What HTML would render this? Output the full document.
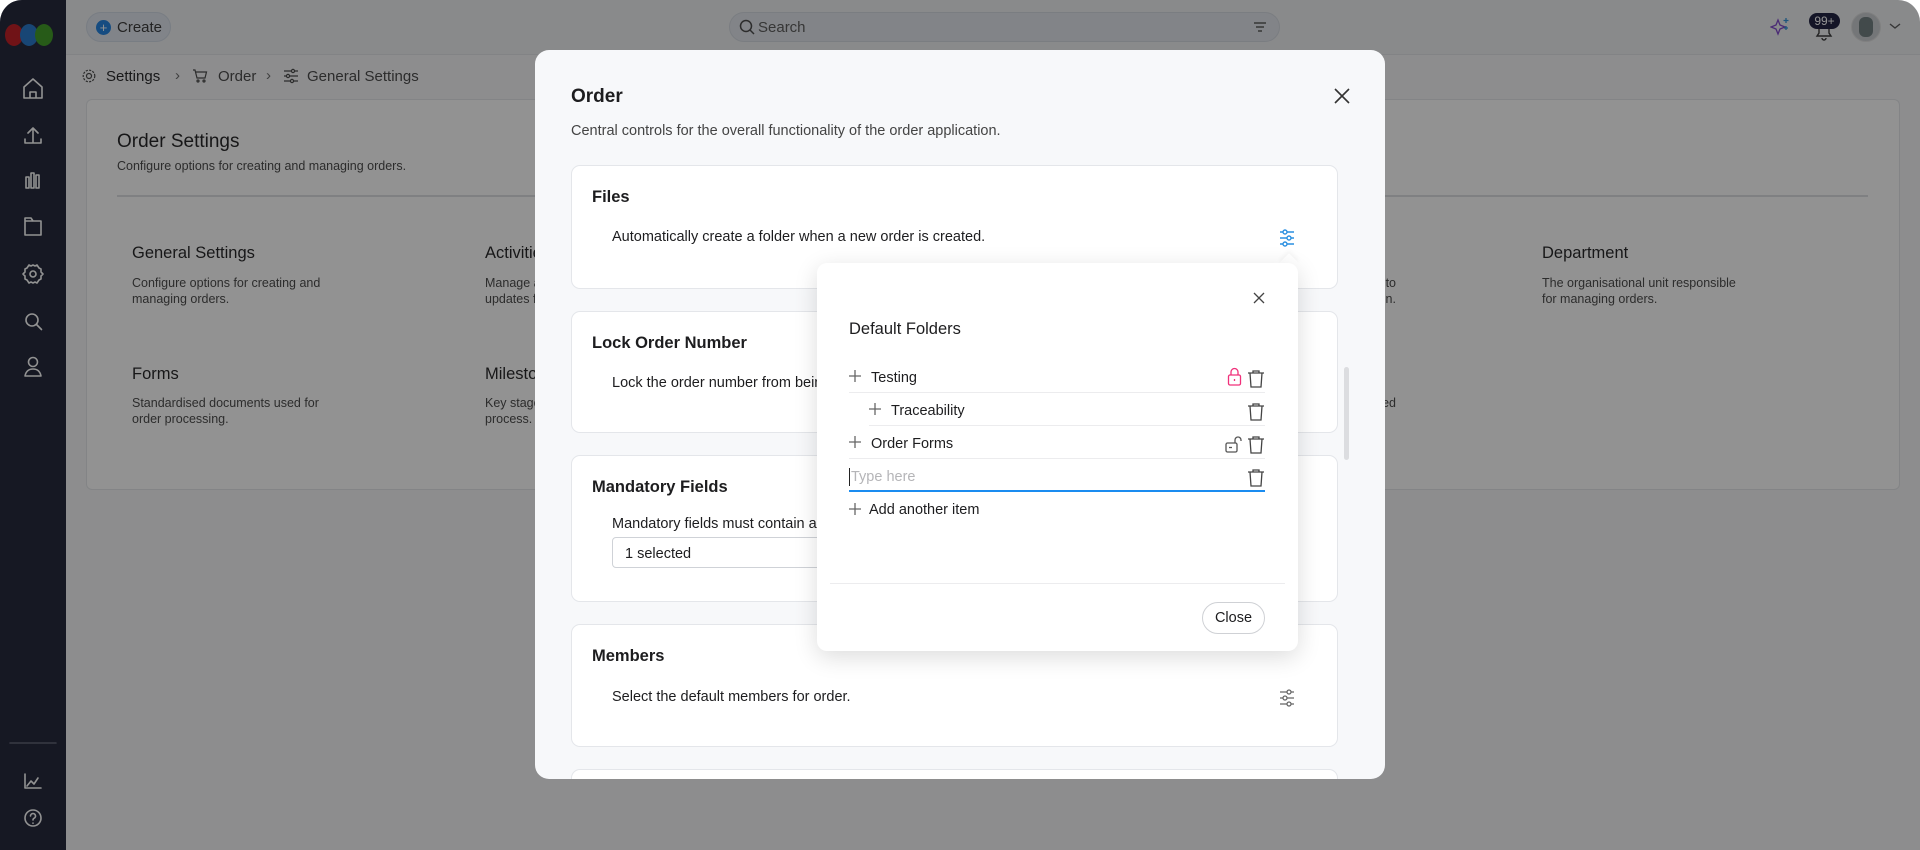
<!DOCTYPE html>
<html><head><meta charset="utf-8"><style>
*{box-sizing:border-box;margin:0;padding:0}
body{width:1920px;height:850px;background:#fff;font-family:"Liberation Sans",sans-serif;overflow:hidden;position:relative;color:#1d1d1f}
.abs{position:absolute}
#frame{position:absolute;left:0;top:0;width:1920px;height:850px;border-radius:22px 22px 0 0;overflow:hidden;background:#f5f6f8}
#side{position:absolute;left:0;top:0;width:66px;height:850px;background:#1a1e33}
#top{position:absolute;left:66px;top:0;right:0;height:55px;background:#eef0f3;border-bottom:1px solid #e2e4e8}
.t{position:absolute;white-space:nowrap;line-height:1}
#overlay{position:absolute;left:0;top:0;width:1920px;height:850px;background:rgba(18,18,18,0.46)}
.card{position:absolute;left:36px;width:767px;background:#fff;border:1px solid #e4e6ea;border-radius:9px}
.card .h{position:absolute;left:20px;font-size:16.5px;font-weight:bold;color:#1d1d1f}
.card .d{position:absolute;left:40px;font-size:14.5px;color:#1d1d1f}
.row{position:absolute;height:33px;border-bottom:1px solid #ececee}
</style></head><body>
<div id="frame">
 <div id="side">
  <div class="abs" style="left:5px;top:24px;width:18px;height:22px;border-radius:50%;background:#c0161c"></div>
  <div class="abs" style="left:20px;top:24px;width:18px;height:22px;border-radius:50%;background:#1f73c9"></div>
  <div class="abs" style="left:35px;top:24px;width:18px;height:22px;border-radius:50%;background:#3a9a1e"></div>
  <svg class="abs" style="left:0;top:0" width="66" height="850" fill="none" stroke="#fff" stroke-width="1.6" stroke-linecap="round" stroke-linejoin="round">
   <path d="M24 87l9-8 9 8v11H24z M30 98v-6h6v6"/>
   <path d="M33 142v-14 M28 133l5-5 5 5 M25 139v4h16v-4"/>
   <path d="M26 188v-11h3v11z M31 188v-15h3v15z M36 188v-13h3v13z"/>
   <path d="M25 221h16v14H25z M25 221v-3h6l2 3"/>
   <circle cx="33" cy="274" r="3"/><path d="M33 265l2 1 2-1 2 3 2 1v3l2 2-2 2v3l-2 1-2 3-2-1-2 1-2-1-2 1-2-3-2-1v-3l-2-2 2-2v-3l2-1 2-3 2 1z"/>
   <circle cx="32" cy="320" r="6"/><path d="M36.5 324.5l5 5"/>
   <circle cx="33" cy="362" r="4.5"/><path d="M25 376c1-5 4-7 8-7s7 2 8 7z"/>
   <path d="M10 743h46" stroke="#5b5f72"/>
   <path d="M25 774v14h16 M27 786l4-5 3 3 4-6"/>
   <circle cx="33" cy="818" r="8"/><path d="M30.5 816a2.5 2.5 0 1 1 3.5 2.3c-.8.4-1 1-1 1.7 M33 823v.2"/>
  </svg>
 </div>
 <div id="top">
  <div class="abs" style="left:20px;top:12px;width:85px;height:30px;border-radius:15px;background:#dfe5ee;border:1px solid #d0d8e4"></div>
  <div class="abs" style="left:30px;top:20px;width:15px;height:15px;border-radius:50%;background:#1a7fe0;color:#fff;font-size:13px;line-height:15px;text-align:center">+</div>
  <div class="t" style="left:51px;top:20px;font-size:15px;color:#333">Create</div>
  <div class="abs" style="left:663px;top:12px;width:551px;height:30px;border-radius:15px;background:#e2e6ec;border:1px solid #d3d8e0"></div>
  <svg class="abs" style="left:672px;top:18px" width="18" height="18" fill="none" stroke="#444" stroke-width="1.5"><circle cx="8" cy="8" r="5.5"/><path d="M12 12l4 4"/></svg>
  <div class="t" style="left:692px;top:20px;font-size:15px;color:#555">Search</div>
  <svg class="abs" style="left:1186px;top:20px" width="16" height="14" stroke="#555" stroke-width="1.4"><path d="M2 3h12M4 7h8M6 11h4"/></svg>
  <svg class="abs" style="left:1704px;top:16px" width="20" height="20" fill="none" stroke="#7b3fc9" stroke-width="1.3"><path d="M8 4l2 5 5 2-5 2-2 5-2-5-5-2 5-2z"/><path d="M16 2v5M13.5 4.5h5M16 10v4M14 12h4" stroke="#2a8fd8"/></svg>
  <svg class="abs" style="left:1747px;top:18px" width="22" height="24" fill="none" stroke="#333" stroke-width="1.4"><path d="M4 18h14l-2-3v-5a5 5 0 0 0-10 0v5z M9 20a2 2 0 0 0 4 0"/></svg>
  <div class="abs" style="left:1743px;top:13px;width:31px;height:16px;border-radius:8px;background:#17193a;color:#fff;font-size:12px;line-height:16px;text-align:center">99+</div>
  <div class="abs" style="left:1785px;top:12px;width:30px;height:30px;border-radius:50%;background:#c8ccd0;border:1px solid #ddd"></div>
  <div class="abs" style="left:1793px;top:17px;width:14px;height:20px;border-radius:6px;background:#6c7a7c"></div>
  <svg class="abs" style="left:1822px;top:21px" width="14" height="10" fill="none" stroke="#555" stroke-width="1.4"><path d="M2 3l5 4 5-4"/></svg>
 </div>
 <svg class="abs" style="left:82px;top:69px" width="14" height="14" fill="none" stroke="#444" stroke-width="1.2"><circle cx="7" cy="7" r="2.5"/><circle cx="7" cy="7" r="5.8" stroke-dasharray="2.2 1.2"/></svg>
 <div class="t" style="left:106px;top:69px;font-size:15px;color:#1d1d1f">Settings</div>
 <div class="t" style="left:175px;top:68px;font-size:15px;color:#666">›</div>
 <svg class="abs" style="left:192px;top:68px" width="16" height="16" fill="none" stroke="#444" stroke-width="1.2"><path d="M1 2h2l2 8h8l1.5-6H4"/><circle cx="6" cy="13" r="1"/><circle cx="12" cy="13" r="1"/></svg>
 <div class="t" style="left:218px;top:69px;font-size:15px;color:#444">Order</div>
 <div class="t" style="left:266px;top:68px;font-size:15px;color:#666">›</div>
 <svg class="abs" style="left:283px;top:68px" width="16" height="16" fill="none" stroke="#444" stroke-width="1.2"><path d="M1 3h14M1 8h14M1 13h14"/><circle cx="10" cy="3" r="1.6" fill="#eee"/><circle cx="5" cy="8" r="1.6" fill="#eee"/><circle cx="9" cy="13" r="1.6" fill="#eee"/></svg>
 <div class="t" style="left:307px;top:69px;font-size:15px;color:#444">General Settings</div>
 <div class="abs" style="left:86px;top:99px;width:1814px;height:391px;background:#fff;border:1px solid #e3e5e9;border-radius:6px"></div>
 <div class="t" style="left:117px;top:132px;font-size:19px;color:#1d1d1f">Order Settings</div>
 <div class="t" style="left:117px;top:160px;font-size:12.5px;color:#444">Configure options for creating and managing orders.</div>
 <div class="abs" style="left:117px;top:195px;width:1751px;height:2px;background:#dcdee2"></div>
 <div class="t" style="left:132px;top:245px;font-size:16.5px">General Settings</div>
 <div class="t" style="left:132px;top:275px;font-size:12.5px;color:#444;line-height:16px;white-space:normal;width:220px">Configure options for creating and managing orders.</div>
 <div class="t" style="left:485px;top:245px;font-size:16.5px">Activities</div>
 <div class="t" style="left:485px;top:275px;font-size:12.5px;color:#444;line-height:16px">Manage activities and<br>updates for orders.</div>
 <div class="t" style="left:1190px;top:275px;font-size:12.5px;color:#444;line-height:16px;width:206px;text-align:right">responsible to<br>completion.</div>
 <div class="t" style="left:1542px;top:245px;font-size:16.5px">Department</div>
 <div class="t" style="left:1542px;top:275px;font-size:12.5px;color:#444;line-height:16px">The organisational unit responsible<br>for managing orders.</div>
 <div class="t" style="left:132px;top:366px;font-size:16.5px">Forms</div>
 <div class="t" style="left:132px;top:395px;font-size:12.5px;color:#444;line-height:16px">Standardised documents used for<br>order processing.</div>
 <div class="t" style="left:485px;top:366px;font-size:16.5px">Milestones</div>
 <div class="t" style="left:485px;top:395px;font-size:12.5px;color:#444;line-height:16px">Key stages in the order<br>process.</div>
 <div class="t" style="left:1190px;top:395px;font-size:12.5px;color:#444;line-height:16px;width:206px;text-align:right">completed</div>
 <div id="overlay"></div>
</div>

<div class="abs" style="left:535px;top:50px;width:850px;height:729px;background:#f7f8fa;border-radius:14px;overflow:hidden">
 <div class="t" style="left:36px;top:37px;font-size:19px;font-weight:bold">Order</div>
 <svg class="abs" style="left:798px;top:37px" width="18" height="18" stroke="#333" stroke-width="1.6"><path d="M2 2l14 14M16 2L2 16"/></svg>
 <div class="t" style="left:36px;top:74px;font-size:14.5px;color:#444">Central controls for the overall functionality of the order application.</div>
 <div class="card" style="top:115px;height:124px">
  <div class="h" style="top:22px">Files</div>
  <div class="d" style="top:63px">Automatically create a folder when a new order is created.</div>
  <svg class="abs" style="left:707px;top:63px" width="16" height="18" fill="none" stroke="#2a8fe0" stroke-width="1.4"><path d="M1 3h14M1 9h14M1 15h14"/><circle cx="6" cy="3" r="2" fill="#fff"/><circle cx="10" cy="9" r="2" fill="#fff"/><circle cx="6" cy="15" r="2" fill="#fff"/></svg>
 </div>
 <div class="card" style="top:261px;height:122px">
  <div class="h" style="top:22px">Lock Order Number</div>
  <div class="d" style="top:63px">Lock the order number from being changed.</div>
 </div>
 <div class="card" style="top:405px;height:147px">
  <div class="h" style="top:22px">Mandatory Fields</div>
  <div class="d" style="top:60px">Mandatory fields must contain a value.</div>
  <div class="abs" style="left:40px;top:81px;width:300px;height:31px;border:1px solid #cfd2d7;border-radius:4px;font-size:14.5px;padding:8px 12px">1 selected</div>
 </div>
 <div class="card" style="top:574px;height:123px">
  <div class="h" style="top:22px">Members</div>
  <div class="d" style="top:64px">Select the default members for order.</div>
  <svg class="abs" style="left:707px;top:64px" width="16" height="18" fill="none" stroke="#666" stroke-width="1.3"><path d="M1 3h14M1 9h14M1 15h14"/><circle cx="10" cy="3" r="2" fill="#fff"/><circle cx="6" cy="9" r="2" fill="#fff"/><circle cx="10" cy="15" r="2" fill="#fff"/></svg>
 </div>
 <div class="card" style="top:719px;height:100px"></div>
 <div class="abs" style="left:809px;top:317px;width:5px;height:93px;border-radius:3px;background:#dcdde0"></div>
</div>

<div class="abs" style="left:1282px;top:256px;width:14px;height:14px;background:#fff;transform:rotate(45deg);box-shadow:-2px -2px 4px rgba(0,0,0,0.04)"></div>
<div class="abs" style="left:817px;top:263px;width:481px;height:388px;background:#fff;border-radius:10px;box-shadow:0 6px 24px rgba(0,0,0,0.14)">
 <svg class="abs" style="left:435px;top:28px" width="14" height="14" stroke="#444" stroke-width="1.3"><path d="M2 2l10 10M12 2L2 12"/></svg>
 <div class="t" style="left:32px;top:58px;font-size:16.5px">Default Folders</div>
 <div class="row" style="left:32px;top:97px;width:416px"></div>
 <div class="row" style="left:52px;top:130px;width:396px"></div>
 <div class="row" style="left:32px;top:163px;width:416px"></div>
 <div class="abs" style="left:32px;top:227px;width:416px;height:2px;background:#1a8cf0"></div>
 <svg class="abs" style="left:0;top:0" width="481" height="270" fill="none" stroke="#666" stroke-width="1.3">
  <path d="M38 107v12M32 113h12"/><path d="M58 140v12M52 146h12"/><path d="M38 173v12M32 179h12"/><path d="M38 240v12M32 246h12"/>
  <g transform="translate(28 0)" stroke="#444"><path d="M405 110h12l-1 14h-10z M403 110h16 M408 110v-2h6v2"/>
  <path d="M405 143h12l-1 14h-10z M403 143h16 M408 143v-2h6v2"/>
  <path d="M405 176h12l-1 14h-10z M403 176h16 M408 176v-2h6v2"/>
  <path d="M405 209h12l-1 14h-10z M403 209h16 M408 209v-2h6v2"/></g>
  <g transform="translate(27 0)"><g stroke="#f0307a"><rect x="384.5" y="112" width="12" height="10" rx="1.5"/><path d="M387 112v-3a3.5 3.5 0 0 1 7 0v3"/><path d="M390.5 116v2"/></g>
  <g stroke="#555"><rect x="382" y="180" width="11" height="9" rx="1.5"/><path d="M391 180v-3a3 3 0 0 1 6 0v1"/><path d="M385 184.5h3"/></g></g>
 </svg>
 <div class="t" style="left:54px;top:108px;font-size:14.5px">Testing</div>
 <div class="t" style="left:74px;top:141px;font-size:14.5px">Traceability</div>
 <div class="t" style="left:54px;top:174px;font-size:14.5px">Order Forms</div>
 <div class="abs" style="left:32px;top:205px;width:1px;height:18px;background:#222"></div>
 <div class="t" style="left:34px;top:207px;font-size:14.5px;color:#b5b5b8">Type here</div>
 <div class="t" style="left:52px;top:240px;font-size:14.5px">Add another item</div>
 <div class="abs" style="left:13px;top:320px;width:455px;height:1px;background:#ececee"></div>
 <div class="abs" style="left:385px;top:339px;width:63px;height:32px;border:1px solid #cfd1d5;border-radius:16px;font-size:14.5px;text-align:center;line-height:30px">Close</div>
</div>
</body></html>
